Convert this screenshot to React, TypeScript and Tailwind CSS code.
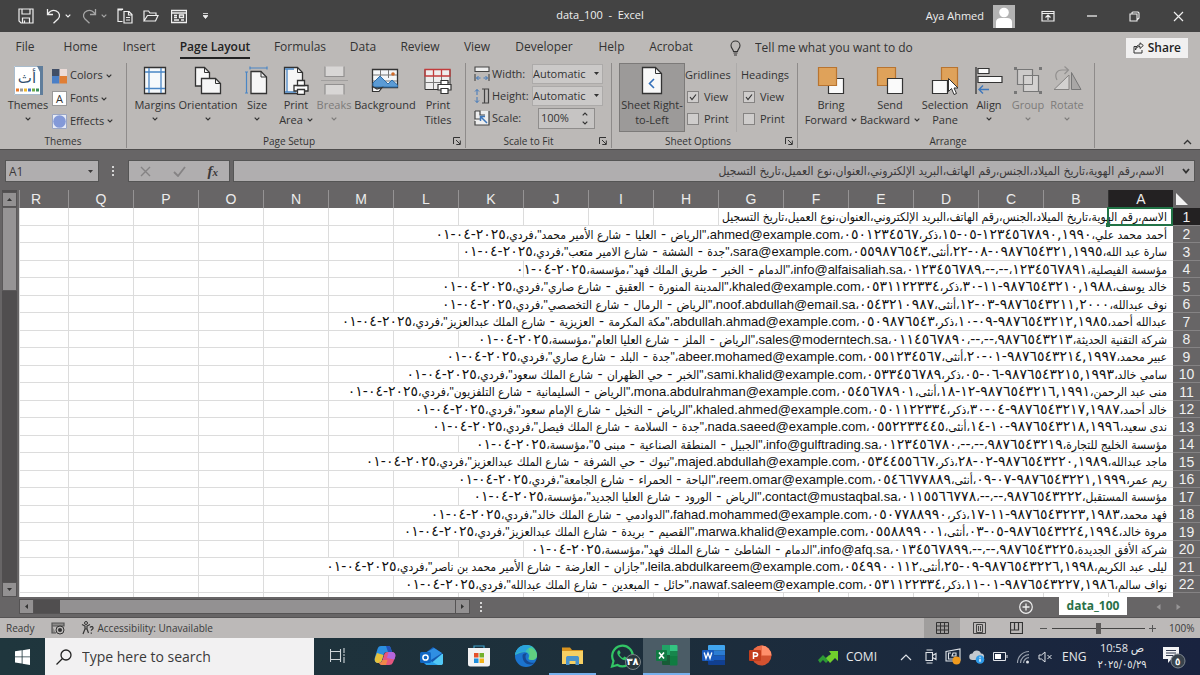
import React from 'react';
import clsx from 'clsx';

interface SheetRow {
  before: string;
  email?: string;
  after?: string;
  span: number; // how many columns the text spills over
}

const HEADER_TEXT = 'الاسم،رقم الهوية،تاريخ الميلاد،الجنس،رقم الهاتف،البريد الإلكتروني،العنوان،نوع العميل،تاريخ التسجيل';

const COLUMNS = ['A', 'B', 'C', 'D', 'E', 'F', 'G', 'H', 'I', 'J', 'K', 'L', 'M', 'N', 'O', 'P', 'Q', 'R'];

const ROWS: SheetRow[] = [
  { before: HEADER_TEXT, span: 7 },
  { before: 'أحمد محمد علي،١٢٣٤٥٦٧٨٩٠,١٩٩٠-٠٥-١٥،ذكر،٠٥٠١٢٣٤٥٦٧،', email: 'ahmed@example.com', after: '،"الرياض - العليا - شارع الأمير محمد"،فردي،٢٠٢٥-٠٤-٠١', span: 12 },
  { before: 'سارة عبد الله،٠٩٨٧٦٥٤٣٢١,١٩٩٥-٠٨-٢٢،أنثى،٠٥٥٩٨٧٦٥٤٣،', email: 'sara@example.com', after: '،"جدة - الششة - شارع الامير متعب"،فردي،٢٠٢٥-٠٤-٠١', span: 11 },
  { before: 'مؤسسة الفيصلية،١٢٣٤٥٦٧٨٩١،--،--،٠١٢٣٤٥٦٧٨٩،', email: 'info@alfaisaliah.sa', after: '،"الدمام - الخبر - طريق الملك فهد"،مؤسسة،٢٠٢٥-٠٤-٠١', span: 10 },
  { before: 'خالد يوسف،٩٨٧٦٥٤٣٢١٠,١٩٨٨-١١-٣٠،ذكر،٠٥٣١١٢٢٣٣٤،', email: 'khaled@example.com', after: '،"المدينة المنورة - العقيق - شارع صاري"،فردي،٢٠٢٥-٠٤-٠١', span: 12 },
  { before: 'نوف عبدالله،٩٨٧٦٥٤٣٢١١,٢٠٠٠-٠٣-١٢،أنثى،٠٥٤٣٢١٠٩٨٧،', email: 'noof.abdullah@email.sa', after: '،"الرياض - الرمال - شارع التخصصي"،فردي،٢٠٢٥-٠٤-٠١', span: 12 },
  { before: 'عبدالله أحمد،٩٨٧٦٥٤٣٢١٢,١٩٨٥-٠٩-١٠،ذكر،٠٥٠٩٨٧٦٥٤٣،', email: 'abdullah.ahmad@example.com', after: '،"مكة المكرمة - العزيزية - شارع الملك عبدالعزيز"،فردي،٢٠٢٥-٠٤-٠١', span: 13 },
  { before: 'شركة التقنية الحديثة،٩٨٧٦٥٤٣٢١٣،--،--،٠١١٤٥٦٧٨٩٠،', email: 'sales@moderntech.sa', after: '،"الرياض - الملز - شارع العليا العام"،مؤسسة،٢٠٢٥-٠٤-٠١', span: 11 },
  { before: 'عبير محمد،٩٨٧٦٥٤٣٢١٤,١٩٩٧-٠١-٢٠،أنثى،٠٥٥١٢٣٤٥٦٧،', email: 'abeer.mohamed@example.com', after: '،"جدة - البلد - شارع صاري"،فردي،٢٠٢٥-٠٤-٠١', span: 12 },
  { before: 'سامي خالد،٩٨٧٦٥٤٣٢١٥,١٩٩٣-٠٦-٠٥،ذكر،٠٥٣٣٤٥٦٧٨٩،', email: 'sami.khalid@example.com', after: '،"الخبر - حي الظهران - شارع الملك سعود"،فردي،٢٠٢٥-٠٤-٠١', span: 12 },
  { before: 'منى عبد الرحمن،٩٨٧٦٥٤٣٢١٦,١٩٩١-١٢-١٨،أنثى،٠٥٤٥٦٧٨٩٠١،', email: 'mona.abdulrahman@example.com', after: '،"الرياض - السليمانية - شارع التلفزيون"،فردي،٢٠٢٥-٠٤-٠١', span: 13 },
  { before: 'خالد أحمد،٩٨٧٦٥٤٣٢١٧,١٩٨٧-٠٤-٣٠،ذكر،٠٥٠١١٢٢٣٣٤،', email: 'khaled.ahmed@example.com', after: '،"الرياض - النخيل - شارع الإمام سعود"،فردي،٢٠٢٥-٠٤-٠١', span: 12 },
  { before: 'ندى سعيد،٩٨٧٦٥٤٣٢١٨,١٩٩٦-١٠-١٤،أنثى،٠٥٥٢٢٣٣٤٤٥،', email: 'nada.saeed@example.com', after: '،"جدة - السلامة - شارع الملك فيصل"،فردي،٢٠٢٥-٠٤-٠١', span: 12 },
  { before: 'مؤسسة الخليج للتجارة،٩٨٧٦٥٤٣٢١٩،--،--،٠١٢٣٤٥٦٧٨٠،', email: 'info@gulftrading.sa', after: '،"الجبيل - المنطقة الصناعية - مبنى ٥"،مؤسسة،٢٠٢٥-٠٤-٠١', span: 11 },
  { before: 'ماجد عبدالله،٩٨٧٦٥٤٣٢٢٠,١٩٨٩-٠٢-٢٨،ذكر،٠٥٣٤٤٥٥٦٦٧،', email: 'majed.abdullah@example.com', after: '،"تبوك - حي الشرفة - شارع الملك عبدالعزيز"،فردي،٢٠٢٥-٠٤-٠١', span: 13 },
  { before: 'ريم عمر،٩٨٧٦٥٤٣٢٢١,١٩٩٩-٠٧-٠٩،أنثى،٠٥٤٦٦٧٧٨٨٩،', email: 'reem.omar@example.com', after: '،"الباحة - الحمراء - شارع الجامعة"،فردي،٢٠٢٥-٠٤-٠١', span: 12 },
  { before: 'مؤسسة المستقبل،٩٨٧٦٥٤٣٢٢٢،--،--،٠١١٥٥٦٦٧٧٨،', email: 'contact@mustaqbal.sa', after: '،"الرياض - الورود - شارع العليا الجديد"،مؤسسة،٢٠٢٥-٠٤-٠١', span: 11 },
  { before: 'فهد محمد،٩٨٧٦٥٤٣٢٢٣,١٩٨٣-١١-١٧،ذكر،٠٥٠٧٧٨٨٩٩٠،', email: 'fahad.mohammed@example.com', after: '،"الدوادمي - شارع الملك خالد"،فردي،٢٠٢٥-٠٤-٠١', span: 12 },
  { before: 'مروة خالد،٩٨٧٦٥٤٣٢٢٤,١٩٩٤-٠٥-٠٣،أنثى،٠٥٥٨٨٩٩٠٠١،', email: 'marwa.khalid@example.com', after: '،"القصيم - بريدة - شارع الملك عبدالعزيز"،فردي،٢٠٢٥-٠٤-٠١', span: 12 },
  { before: 'شركة الأفق الجديدة،٩٨٧٦٥٤٣٢٢٥،--،--،٠١٣٤٥٦٧٨٩٩،', email: 'info@afq.sa', after: '،"الدمام - الشاطئ - شارع الملك فهد"،مؤسسة،٢٠٢٥-٠٤-٠١', span: 10 },
  { before: 'ليلى عبد الكريم،٩٨٧٦٥٤٣٢٢٦,١٩٩٨-٠٩-٢٥،أنثى،٠٥٤٩٩٠٠١١٢،', email: 'leila.abdulkareem@example.com', after: '،"جازان - العارضة - شارع الأمير محمد بن ناصر"،فردي،٢٠٢٥-٠٤-٠١', span: 14 },
  { before: 'نواف سالم،٩٨٧٦٥٤٣٢٢٧,١٩٨٦-٠١-١١،ذكر،٠٥٣١١٢٢٣٣٤،', email: 'nawaf.saleem@example.com', after: '،"حائل - المبعدين - شارع الملك عبدالله"،فردي،٢٠٢٥-٠٤-٠١', span: 12 },
];

const TABS = [
  { label: 'File', width: 'w-[50px]' },
  { label: 'Home', width: 'w-[61px]' },
  { label: 'Insert', width: 'w-[56px]' },
  { label: 'Page Layout', width: 'w-[96px]' },
  { label: 'Formulas', width: 'w-[74px]' },
  { label: 'Data', width: 'w-[52px]' },
  { label: 'Review', width: 'w-[62px]' },
  { label: 'View', width: 'w-[52px]' },
  { label: 'Developer', width: 'w-[82px]' },
  { label: 'Help', width: 'w-[53px]' },
  { label: 'Acrobat', width: 'w-[66px]' },
];

/* ---------- small drawing helpers ---------- */

interface IconProps {
  w: number;
  h?: number;
  className?: string;
  children: React.ReactNode;
}

const Icon: React.FC<IconProps> = ({ w, h = w, className, children }) => (
  <svg width={w} height={h} viewBox={`0 0 ${w} ${h}`} fill="none" className={clsx('shrink-0', className)} aria-hidden="true">
    {children}
  </svg>
);

const Chevron: React.FC<{ className?: string }> = ({ className }) => (
  <Icon w={6} h={4} className={className}>
    <path d="M0.7 0.7 3 3 5.3 0.7" stroke="currentColor" strokeWidth="1.2" />
  </Icon>
);

const Caret: React.FC<{ className?: string }> = ({ className }) => (
  <Icon w={5} h={3} className={className}>
    <path d="M0 0h5L2.5 3z" fill="currentColor" />
  </Icon>
);

const Launcher: React.FC<{ label: string }> = ({ label }) => (
  <button aria-label={label} className="absolute right-1 bottom-[3px]">
    <Icon w={8}>
      <path d="M0.5 7V0.5H7M3 3l4 4M7.3 3.5v4h-4" stroke="#333" />
    </Icon>
  </button>
);

/* ---------- title bar ---------- */

const TitleBar = () => (
  <header className="relative flex h-8 items-center bg-[#434343] text-[#efefef]">
    <div className="flex items-center pl-[18px]">
      <button aria-label="Save" className="w-7">
        <Icon w={16}>
          <path d="M1 1h14v14H3l-2-2zM4 1v5h8V1M4.5 15v-5h7v5M6.5 12.500v2" stroke="currentColor" strokeWidth="1.2" />
        </Icon>
      </button>
      <button aria-label="Undo" className="flex w-9 items-center gap-1">
        <Icon w={15} h={16}>
          <path d="M1.500 1v5.500H7M1.800 6.200C4 3 7 1.800 10 2.800c4 1.500 4.500 5.700 2 8.200l-4.500 4.300" stroke="currentColor" strokeWidth="1.300" />
        </Icon>
        <Chevron />
      </button>
      <button aria-label="Redo" className="flex w-[35px] items-center gap-1 text-[#a5a5a5]">
        <Icon w={15} h={16}>
          <path d="M13.500 1v5.500H8M13.200 6.200C11 3 8 1.800 5 2.800 1 4.300.5 8.500 3 11l4.500 4.300" stroke="currentColor" strokeWidth="1.300" />
        </Icon>
        <Chevron />
      </button>
      <button aria-label="Paste" className="w-[26px]">
        <Icon w={16}>
          <path d="M5.500 13.500H1V2h4M1 2V1h4.500v1M7 3.500h5L15 6.500V15H7zM11.500 3.500V7H15M9 9.500h4M9 12h4" stroke="currentColor" strokeWidth="1.200" />
        </Icon>
      </button>
      <button aria-label="Open" className="w-7">
        <Icon w={16}>
          <path d="M1 13V3h4.500l1.500 2h6v2.500M1 13l3.500-5.500H15L12.500 13z" stroke="currentColor" strokeWidth="1.200" />
        </Icon>
      </button>
      <button aria-label="Form" className="w-8">
        <Icon w={16}>
          <path d="M.5 2.500h15v12H.5zM.5 5h15M3 7.500h3M3 9.500h3M3 12h5M8.500 7h4v2.500h-4zM10 12h3" stroke="currentColor" strokeWidth="1.300" />
        </Icon>
      </button>
      <button aria-label="Customize toolbar">
        <Icon w={5} h={6}>
          <path d="M0 .5h5M0 2.500h5L2.500 5.500z" stroke="currentColor" strokeWidth=".8" fill="currentColor" />
        </Icon>
      </button>
    </div>
    <h1 className="pointer-events-none absolute inset-x-0 top-2 text-center text-[11px] leading-[14px] whitespace-pre">data_100  -  Excel</h1>
    <div className="ml-auto flex items-center">
      <span className="text-[11px]">Aya Ahmed</span>
      <Icon w={22} h={23} className="ml-[9px]">
        <path d="M0 0h22v23H0z" fill="#b3b3b3" />
        <circle cx="11" cy="7.500" r="4.800" fill="#fff" />
        <path d="M3 23v-6c0-2.500 2-4 5-4h6c3 0 5 1.500 5 4v6z" fill="#fff" />
      </Icon>
      <button aria-label="Ribbon display options" className="ml-[26px]">
        <Icon w={14} h={12}>
          <path d="M1 1.500h12v9.500H1zM1 3.500h12M7 10V5M4.500 7.500 7 5l2.500 2.500" stroke="currentColor" strokeWidth="1.200" />
        </Icon>
      </button>
      <button aria-label="Minimize" className="ml-8">
        <Icon w={10} h={12}><path d="M0 6h10" stroke="currentColor" strokeWidth="1.300" /></Icon>
      </button>
      <button aria-label="Restore" className="ml-8">
        <Icon w={11}>
          <path d="M1 3h7v7H1zM3 3V1.500L4 1h5l1 1v5L8.500 8.500" stroke="currentColor" strokeWidth="1.100" />
        </Icon>
      </button>
      <button aria-label="Close" className="mr-4 ml-[33px]">
        <Icon w={11}><path d="m1 1 9 9m0-9-9 9" stroke="currentColor" strokeWidth="1.200" /></Icon>
      </button>
    </div>
  </header>
);

/* ---------- ribbon ---------- */

const TabStrip = () => (
  <nav className="flex h-[31px] items-center text-[12px] text-[#333]">
    {TABS.map(tab => {
      const active = tab.label === 'Page Layout';
      return (
        <button key={tab.label} className={clsx('flex justify-center whitespace-nowrap', tab.width)}>
          <span className={clsx('border-b-2 leading-5', active ? 'border-[#222] font-semibold text-[#222]' : 'border-transparent')}>{tab.label}</span>
        </button>
      );
    })}
    <label className="flex items-center pl-[26px]">
      <Icon w={11} h={16}>
        <path d="M3.500 11.500C3.500 9.500 1 8.500 1 5.500a4.500 4.500 0 0 1 9 0c0 3-2.500 4-2.500 6zM3.500 13h4M4 15h3" stroke="#333" strokeWidth="1.100" />
      </Icon>
      <input placeholder="Tell me what you want to do" className="ml-[14px] w-48 bg-transparent leading-4 outline-none placeholder:text-[#333]" />
    </label>
    <button className="mr-3 ml-auto flex h-5 items-center gap-1 bg-[#f1f0f0] px-[7px] font-semibold text-[#222]">
      <Icon w={11} h={12}>
        <path d="M4 4.500H1V11h8V8M2.500 8C3 5.500 4.500 4.500 7 4.500V6.500L10.300 3.500 7 .8v2C4 3 2.800 5 2.500 8z" stroke="#333" />
      </Icon>
      Share
    </button>
  </nav>
);

interface BigButtonProps {
  icon: React.ReactNode;
  lines: string[];
  width: string;
  arrow?: boolean;
  disabled?: boolean;
}

const BigButton: React.FC<BigButtonProps> = ({ icon, lines, width, arrow, disabled }) => (
  <button disabled={disabled} className={clsx('flex flex-col items-center pt-[3px] whitespace-nowrap', width, disabled ? 'text-[#7d7b7a]' : 'text-[#333]')}>
    {icon}
    <span className="mt-[2px] text-[11px] leading-[15px]">{lines[0]}</span>
    {lines[1] ? (
      <span className="flex items-center gap-1 text-[11px] leading-[15px]">{lines[1]}{arrow && <Chevron />}</span>
    ) : (
      arrow && <Chevron className="mt-[5px]" />
    )}
  </button>
);

const Group: React.FC<{ label: string; width: string; launcher?: boolean; children: React.ReactNode }> = ({ label, width, launcher, children }) => (
  <section aria-label={label} className={clsx('relative flex h-[85px] flex-col justify-between border-r border-[#8e8b8a]', width)}>
    <div className="flex">{children}</div>
    <p className={clsx('text-center text-[10px] leading-[13px] text-[#333]', launcher && 'pr-5')}>{label}</p>
    {launcher && <Launcher label={`${label} options`} />}
  </section>
);

const ThemesGroup = () => (
  <Group label="Themes" width="w-[127px]">
    <BigButton
      width="w-[56px]"
      arrow
      lines={['Themes']}
      icon={
        <svg width="29" height="29" viewBox="0 0 29 29" aria-hidden="true">
          <path d="M0 0h29v29H0z" fill="#fff" />
          <path d="M.5.5h28v28H.5z" fill="none" stroke="#a9bccd" />
          <path d="M23 0h6v29h-3V6z" fill="#5f7d9b" />
          <path d="M2 22.500h3v3H2z" fill="#e8792b" /><path d="M6 22.500h3v3H6z" fill="#9a9a9a" />
          <path d="M10 22.500h3v3h-3z" fill="#eeb92f" /><path d="M14 22.500h3v3h-3z" fill="#4472c4" />
          <path d="M18 22.500h3v3h-3z" fill="#70ad47" /><path d="M22 22.500h3v3h-3z" fill="#3a8f5c" />
          <text x="13" y="17" textAnchor="middle" fontSize="15" fontFamily="DejaVu Sans, sans-serif" fill="#34506d">أث</text>
        </svg>
      }
    />
    <div className="flex flex-col pt-px text-[11px] text-[#333]">
      <button className="-ml-1 flex h-[23px] items-center gap-[3px]">
        <Icon w={15} h={16}>
          <path d="M0 1h8v7H0z" fill="#404e66" /><path d="M7.500 1H15v7H7.500z" fill="#ecdcd8" />
          <path d="M0 8h7.500v7.500H0z" fill="#4a7fc6" /><path d="M7.500 8H15v7.500H7.500z" fill="#e07e35" />
        </Icon>
        Colors <Chevron />
      </button>
      <button className="-ml-1 flex h-[23px] items-center gap-[3px]">
        <span className="flex h-[15px] w-[15px] items-center justify-center border border-[#999] bg-white text-[11px] leading-none">A</span>
        Fonts <Chevron />
      </button>
      <button className="-ml-1 flex h-[22px] items-center gap-[3px]">
        <Icon w={15}>
          <path d="M.5.5h14v14H.5z" fill="#e8ecf6" stroke="#9aa6c4" />
          <circle cx="7.500" cy="7.500" r="6.300" fill="#8399d8" />
        </Icon>
        Effects <Chevron />
      </button>
    </div>
  </Group>
);

const PageSetupGroup = () => (
  <Group label="Page Setup" width="w-[339px] pl-[6px]" launcher>
    <BigButton width="w-[44px]" arrow lines={['Margins']} icon={
      <Icon w={24} h={29}>
        <path d="M1.500 1.500h21v26h-21z" fill="#f6f9fb" stroke="#333" strokeWidth="1.300" />
        <path d="M6 2v25M18 2v25M2 6h20M2 22.500h20" stroke="#4a86c5" strokeWidth="1.300" />
      </Icon>
    } />
    <BigButton width="w-[62px]" arrow lines={['Orientation']} icon={
      <Icon w={28} h={29}>
        <path d="M1.500 1.500h9l5 5V20h-14z" fill="#f6f6f6" stroke="#333" strokeWidth="1.300" />
        <path d="M10.500 1.500v5h5" stroke="#333" />
        <path d="M7.500 12.500h14l5 5v10h-19z" fill="#f6f6f6" stroke="#333" strokeWidth="1.300" />
        <path d="M21.500 12.500v5h5" stroke="#333" />
      </Icon>
    } />
    <BigButton width="w-[36px]" arrow lines={['Size']} icon={
      <Icon w={24} h={29}>
        <path d="M5 2h17M5 .5v3M22 .5v3M1.500 6v21M0 6h3M0 27h3" stroke="#4a86c5" strokeWidth="1.200" />
        <path d="M6 5.500h10l5.500 5.500v16.500H6z" fill="#f6f6f6" stroke="#333" strokeWidth="1.300" />
        <path d="M16 5.500V11h5.500" stroke="#333" />
      </Icon>
    } />
    <BigButton width="w-[42px]" arrow lines={['Print', 'Area']} icon={
      <Icon w={26} h={29}>
        <path d="M1.500 1.500h13l5 5v21h-18z" fill="#f6f6f6" stroke="#333" strokeWidth="1.300" />
        <path d="M14.500 1.500v5h5" stroke="#333" />
        <path d="M4 3v23M2 26h11M2 3h9" stroke="#4a86c5" strokeWidth="1.300" />
        <path d="M11 19.500h14V25H11z" fill="#fff" stroke="#333" strokeWidth="1.300" />
        <path d="M14.500 14.500h7v5h-7zM14.500 23.500h7v5h-7z" fill="#fff" stroke="#333" strokeWidth="1.300" />
      </Icon>
    } />
    <BigButton width="w-[34px]" arrow disabled lines={['Breaks']} icon={
      <Icon w={27} h={29}>
        <path d="M4 .5v10h19V.5M4 28.500v-10h19v10" fill="#d8d6d5" stroke="#929090" strokeWidth="1.200" />
        <path d="M0 14.500h27" stroke="#a19f9e" />
      </Icon>
    } />
    <BigButton width="w-[68px]" lines={['Background']} icon={
      <Icon w={28} h={29}>
        <path d="M1.500 3.500h25v18h-25z" fill="#f4f6f8" stroke="#333" strokeWidth="1.300" />
        <path d="M9.500 4v6M17.500 4v8M2 9h24M2 15h24" stroke="#777" />
        <circle cx="22" cy="8" r="1.800" fill="#d06a28" />
        <path d="M2 21v-4l7-7 8 8 4-4 5.500 5v2z" fill="#5b9bd5" stroke="#2f6ea8" />
        <path d="M1.500 20.500v5H8l3-4-5 1.500z" fill="#f6f6f6" stroke="#333" strokeWidth="1.200" />
      </Icon>
    } />
    <BigButton width="w-[38px]" lines={['Print', 'Titles']} icon={
      <Icon w={28} h={29}>
        <path d="M1 3.500h25v20H1z" fill="#eee" stroke="#333" />
        <path d="M9.500 4v19M17.500 4v19M1 16.500h25" stroke="#777" />
        <path d="M1 3.500h25V10H1zM9.500 4v6M17.500 4v6" stroke="#c23b3b" strokeWidth="1.300" />
        <path d="M14 18.500h13V24H14z" fill="#fff" stroke="#333" strokeWidth="1.200" />
        <path d="M17 14.500h7v4h-7zM17 22.500h7v5h-7z" fill="#fff" stroke="#333" strokeWidth="1.200" />
      </Icon>
    } />
  </Group>
);

const ScaleSelect: React.FC<{ id: string }> = ({ id }) => (
  <div className="relative ml-auto">
    <select id={id} className="h-5 w-[71px] appearance-none border border-[#acaaa9] bg-[#cbc9c8] text-[11px] text-[#333]">
      <option>Automatic</option>
    </select>
    <Caret className="pointer-events-none absolute top-2 right-1" />
  </div>
);

const ScaleGroup = () => (
  <Group label="Scale to Fit" width="w-[146px]" launcher>
    <div className="flex w-full flex-col pr-2 pl-2 text-[11px] text-[#333]">
      <div className="flex h-[22px] items-center">
        <Icon w={16} className="mr-[2px]">
          <path d="M1 1v4.500h14V1zM1 8v7M15 8v7" stroke="#444" fill="#eee" strokeWidth="1.100" />
          <path d="M2.500 12h4M9.500 12h4M4.500 10l-2 2 2 2M11.500 10l2 2-2 2" stroke="#3e77bb" />
        </Icon>
        <label htmlFor="width">Width:</label>
        <ScaleSelect id="width" />
      </div>
      <div className="flex h-[22px] items-center">
        <Icon w={16} className="mr-[2px]">
          <path d="M8 1h6.500v14H8M10.500 1v14" stroke="#444" strokeWidth="1.200" />
          <path d="M3 1.500V7M3 9v5.500M1 3.500l2-2 2 2M1 12.500l2 2 2-2" stroke="#3e77bb" />
        </Icon>
        <label htmlFor="height">Height:</label>
        <ScaleSelect id="height" />
      </div>
      <div className="flex h-[22px] items-center">
        <Icon w={16} className="mr-[2px]">
          <path d="M1 1h14v14H1z" fill="#eee" />
          <path d="M1 1v8h5M1 1h5v4h5M1 11v4h14V1" stroke="#444" strokeWidth="1.200" />
          <path d="m13 13-6-6M6.500 11V6.500H11" stroke="#3e77bb" strokeWidth="1.500" />
        </Icon>
        <label htmlFor="scale">Scale:</label>
        <div className="mr-2 ml-auto flex h-[21px] w-[57px] border border-[#8f8d8c] bg-[#c6c4c3]">
          <input id="scale" defaultValue="100%" className="w-9 bg-transparent pl-[2px] outline-none" />
          <div className="flex flex-1 flex-col items-center justify-between py-[3px]">
            <button aria-label="Increase scale"><Chevron className="rotate-180" /></button>
            <button aria-label="Decrease scale"><Chevron /></button>
          </div>
        </div>
      </div>
    </div>
  </Group>
);

const CheckRow: React.FC<{ id: string; label: string; checked?: boolean }> = ({ id, label, checked }) => (
  <div className="flex h-[22px] items-center gap-[5px] pl-[2px]">
    <span className="relative flex">
      <input id={id} type="checkbox" defaultChecked={checked} className="peer size-3 appearance-none border border-[#858382] bg-[#cfcdcc]" />
      <Icon w={12} className="pointer-events-none absolute inset-0 opacity-0 peer-checked:opacity-100">
        <path d="m3 6 2 2.500L9 3.500" stroke="#333" strokeWidth="1.200" />
      </Icon>
    </span>
    <label htmlFor={id}>{label}</label>
  </div>
);

const SheetOptionsGroup = () => (
  <Group label="Sheet Options" width="w-[186px] pl-[7px]" launcher>
    <button aria-pressed="true" className="flex h-[69px] w-[66px] flex-col items-center border border-[#7c7a79] bg-[#9c9a99] pt-[2px] text-[11px] leading-[15px] whitespace-nowrap text-[#333]">
      <Icon w={22} h={29}>
        <path d="M1.500 1.500h13l6 6v20h-19z" fill="#f8f8f8" stroke="#333" strokeWidth="1.300" />
        <path d="M14.500 1.500v6h6" stroke="#333" />
        <path d="m13 13-4.500 4.500L13 22" stroke="#3470ba" strokeWidth="1.600" />
      </Icon>
      <span className="mt-[2px]">Sheet Right-</span>
      <span>to-Left</span>
    </button>
    <div className="flex flex-col border-r border-[#adabaa] pt-px text-[11px] text-[#333]">
      <div className="w-[51px] leading-[22px]">Gridlines</div>
      <CheckRow id="grid-view" label="View" checked />
      <CheckRow id="grid-print" label="Print" />
    </div>
    <div className="flex flex-col pt-px pl-[4px] text-[11px] text-[#333]">
      <div className="leading-[22px]">Headings</div>
      <CheckRow id="head-view" label="View" checked />
      <CheckRow id="head-print" label="Print" />
    </div>
  </Group>
);

const ArrangeGroup = () => (
  <Group label="Arrange" width="w-[297px] pl-[4px]">
    <BigButton width="w-[58px]" arrow lines={['Bring', 'Forward']} icon={
      <Icon w={28} h={29}>
        <path d="M11.500 12.500h15v15h-15z" fill="#fafafa" stroke="#333" strokeWidth="1.200" />
        <path d="M1.500 1.500h18v18h-18z" fill="#dfa25a" stroke="#b87430" strokeWidth="1.200" />
      </Icon>
    } />
    <BigButton width="w-[60px]" arrow lines={['Send', 'Backward']} icon={
      <Icon w={28} h={29}>
        <path d="M1.500 1.500h18v18h-18z" fill="#dfa25a" stroke="#b87430" strokeWidth="1.200" />
        <path d="M11.500 12.500h15v15h-15z" fill="#fafafa" stroke="#333" strokeWidth="1.200" />
      </Icon>
    } />
    <BigButton width="w-[50px]" lines={['Selection', 'Pane']} icon={
      <Icon w={28} h={29}>
        <path d="M10.500 1.500h16v19h-16z" fill="#dfa25a" stroke="#b87430" strokeWidth="1.200" />
        <path d="M1.500 14.500h15v13h-15z" fill="#fafafa" stroke="#333" strokeWidth="1.200" />
        <path d="M17.500 12.500v13l3-3 2.500 6 2.500-1-2.500-5.500H27z" fill="#fff" stroke="#333" />
      </Icon>
    } />
    <BigButton width="w-[38px]" arrow lines={['Align']} icon={
      <Icon w={28} h={29}>
        <path d="M1 1v27" stroke="#333" strokeWidth="1.300" />
        <path d="M3 2.500h11v5H3zM3 10.500h24v6H3z" fill="#fafafa" stroke="#333" strokeWidth="1.200" />
        <path d="M14 23.500H4M8 19.500l-4 4 4 4" stroke="#3e77bb" strokeWidth="1.400" />
      </Icon>
    } />
    <BigButton width="w-[40px]" arrow disabled lines={['Group']} icon={
      <Icon w={28} h={29}>
        <path d="M3.500 3.500h15v15h-15z" fill="#cccac9" stroke="#777" strokeWidth="1.200" />
        <path d="M9.500 9.500h15v16h-15z" stroke="#777" fill="#d3d1d0" strokeWidth="1.200" />
        <path d="M9.500 18.500h9v-9" stroke="#777" />
        <path d="M0 1h3v3H0zM25 1h3v3h-3zM0 25h3v3H0zM25 25h3v3h-3z" fill="#777" />
      </Icon>
    } />
    <BigButton width="w-[38px]" arrow disabled lines={['Rotate']} icon={
      <Icon w={29} h={29}>
        <path d="M1 23.500h15V9z" fill="#d3d1d0" stroke="#858382" />
        <path d="M18.500 6.500v17H28z" fill="#a9a7a6" stroke="#777" />
        <path d="M4 14C1 8 4 4 9 4h6M11.500.5 15.500 4l-4 4" stroke="#92908f" strokeWidth="1.200" />
      </Icon>
    } />
  </Group>
);

const Ribbon = () => (
  <div className="border-b border-[#4f4d4d] bg-[#bcb9b7]">
    <TabStrip />
    <div className="flex h-[86px]">
      <ThemesGroup />
      <PageSetupGroup />
      <ScaleGroup />
      <SheetOptionsGroup />
      <ArrangeGroup />
      <button aria-label="Collapse the ribbon" className="mt-auto mr-2 mb-1 ml-auto">
        <Icon w={9} h={6}><path d="m1 5 3.500-3.500L8 5" stroke="#333" strokeWidth="1.300" /></Icon>
      </button>
    </div>
  </div>
);

/* ---------- formula bar ---------- */

const FormulaBar = () => (
  <div className="flex items-center px-[5px] pt-[10px] pb-2 text-[#3b393a]">
    <div className="relative flex">
      <input aria-label="Name box" defaultValue="A1" className="h-[22px] w-[94px] border border-[#555] bg-[#b0aeaf] pl-[3px] text-[12px]" />
      <Caret className="absolute top-[10px] right-[6px]" />
    </div>
    <Icon w={3} h={10} className="mx-[13px]">
      <path d="M0 0h2v2H0zM0 4h2v2H0zM0 8h2v2H0z" fill="#d5d5d5" />
    </Icon>
    <div className="flex h-[22px] w-[102px] items-center justify-around border border-[#555] bg-[#b0aeaf]">
      <button aria-label="Cancel"><Icon w={11}><path d="m1 1 9 9m0-9-9 9" stroke="#858384" strokeWidth="1.400" /></Icon></button>
      <button aria-label="Enter"><Icon w={13} h={11}><path d="m1 6 4 4 7-9" stroke="#858384" strokeWidth="1.800" /></Icon></button>
      <button aria-label="Insert function" className="font-['Liberation_Serif',serif] text-[15px] leading-none font-bold italic">f<span className="text-[11px]">x</span></button>
    </div>
    <div className="ml-[3px] flex h-[22px] flex-1 items-center border border-[#555] bg-[#b0aeaf] pr-1">
      <input aria-label="Formula bar" dir="rtl" defaultValue={HEADER_TEXT} className="h-5 min-w-0 flex-1 bg-transparent pr-[18px] font-['DejaVu_Sans_Condensed','DejaVu_Sans',sans-serif] text-[12px] leading-4 outline-none" />
      <button aria-label="Expand formula bar"><Icon w={8} h={6}><path d="m1 1 3 3.500L7 1" stroke="#333" strokeWidth="1.800" /></Icon></button>
    </div>
  </div>
);

/* ---------- grid ---------- */

const ARROW_BOX = 'flex items-center justify-center border border-[#555354] bg-[#939192] text-[#333]';

const VerticalScroll = () => (
  <div className="mr-[2px] ml-[2px] flex w-[15px] flex-col bg-[#504e4f] pt-[2px]">
    <button aria-label="Scroll up" className={clsx('h-[15px]', ARROW_BOX)}><Caret className="rotate-180" /></button>
    <div className="h-[84px] border border-[#5b595a] bg-[#969495]" />
    <button aria-label="Scroll down" className={clsx('mt-auto h-[15px]', ARROW_BOX)}><Caret /></button>
  </div>
);

// Arabic letters are drawn small, the digit runs and dashes a bit wider
const ArabicText: React.FC<{ text: string }> = ({ text }) => (
  <span className="text-[12px]">
    {text.split(/([٠-٩][٠-٩,-]*| - |--)/).map((part, i) =>
      i % 2 ? <span key={i} className="font-['DejaVu_Sans',sans-serif] text-[14px]">{part}</span> : part
    )}
  </span>
);

const Grid = () => (
  <div className="min-w-0 flex-1 overflow-hidden bg-white">
    <table dir="rtl" className="w-full table-fixed border-separate border-spacing-0 font-['Liberation_Sans','DejaVu_Sans_Condensed','DejaVu_Sans',sans-serif] text-[#111]">
      <colgroup>
        <col className="w-[27px]" />
        {COLUMNS.map(c => <col key={c} className={c === 'R' ? undefined : 'w-[65px]'} />)}
      </colgroup>
      <thead>
        <tr className="h-[18px] bg-[#676566] text-[14px] leading-[18px] text-[#ececec]">
          <th aria-label="Select all" className="p-0">
            <Icon w={12} className="mr-[12px] block"><path d="M0 0v12h12z" fill="#f2f2f2" /></Icon>
          </th>
          {COLUMNS.map(c => (
            <th key={c} scope="col" className={clsx('overflow-hidden border-l p-0 font-normal', c === 'A' ? 'border-[#333] bg-[#232122]' : 'border-[#959394]', c === 'R' && 'pr-[16px]')}>{c}</th>
          ))}
        </tr>
      </thead>
      <tbody>
        {ROWS.map((row, i) => (
          <tr key={i} className="h-[17px] odd:h-[18px]">
            <th scope="row" className={clsx('border-b border-[#858384] p-0 text-[14px] leading-4 font-normal text-[#f0f0f0]', i === 0 ? 'bg-[#232122]' : 'bg-[#676566]')}>{i + 1}</th>
            <td colSpan={row.span} className="relative border-b border-l border-[#dcdcdc] p-0 pr-[6px] text-[13px] leading-[14px] whitespace-nowrap">
              <ArabicText text={row.before} />
              {row.email}
              <ArabicText text={row.after ?? ''} />
              {i === 0 && (
                <span className="absolute -top-px right-0 h-[19px] w-[66px] border-2 border-[#217346]">
                  <span className="absolute -bottom-[3px] -left-[3px] size-1 bg-[#217346]" />
                </span>
              )}
            </td>
            {COLUMNS.slice(row.span).map(c => <td key={c} className="border-b border-l border-[#dcdcdc] p-0" />)}
          </tr>
        ))}
        <tr className="h-1">
          <th className="bg-[#676566] p-0" />
          {COLUMNS.map(c => <td key={c} className="border-l border-[#dcdcdc] p-0" />)}
        </tr>
      </tbody>
    </table>
  </div>
);

const SheetNav = () => (
  <div className="flex h-[21px] items-start border-b border-[#555354] pl-[19px]">
    <button aria-label="Scroll left" className={clsx('mt-[2px] h-[15px] w-[15px]', ARROW_BOX)}><Caret className="rotate-90" /></button>
    <div className="mt-[2px] h-[15px] w-[421px] border-y border-[#555354] bg-[#504e4f] pl-[26px]">
      <div className="h-full bg-[#939192]" />
    </div>
    <button aria-label="Scroll right" className={clsx('mt-[2px] h-[15px] w-[15px]', ARROW_BOX)}><Caret className="-rotate-90" /></button>
    <Icon w={2} h={10} className="mt-[5px] ml-[10px]">
      <path d="M0 0h2v2H0zM0 4h2v2H0zM0 8h2v2H0z" fill="#d5d5d5" />
    </Icon>
    <div className="ml-auto flex items-start">
      <button aria-label="New sheet" className="mt-[3px] mr-[26px]">
        <Icon w={14}>
          <circle cx="7" cy="7" r="6.300" stroke="#eee" strokeWidth="1.200" />
          <path d="M7 3.500v7M3.500 7h7" stroke="#eee" strokeWidth="1.300" />
        </Icon>
      </button>
      <button className="h-[18px] w-[68px] bg-white text-center text-[12px] leading-[18px] font-bold text-[#2a7048]">data_100</button>
      <div className="mt-[7px] mr-[19px] ml-[29px] flex gap-[15px] text-[#989697]">
        <Icon w={5} h={6}><path d="M4.500 0v6L.5 3z" fill="currentColor" /></Icon>
        <Icon w={5} h={6}><path d="M.5 0v6l4-3z" fill="currentColor" /></Icon>
      </div>
    </div>
  </div>
);

const StatusBar = () => (
  <footer className="flex h-5 items-center bg-[#bcb9b8] pl-[6px] text-[10px] text-[#3a3a3a]">
    <span>Ready</span>
    <Icon w={14} h={13} className="ml-[17px]">
      <path d="M1 1h12v3H1zM1 4v7h4" stroke="#555" strokeWidth="1.200" fill="#8c8a89" />
      <circle cx="9" cy="8" r="4" fill="#bcb9b8" stroke="#333" /><circle cx="9" cy="8" r="2" fill="#333" />
    </Icon>
    <button className="ml-4 flex items-center gap-[3px]">
      <Icon w={13} h={14}>
        <circle cx="5" cy="2" r="1.500" stroke="#333" />
        <path d="m1 3.500 3 1.500v3l-2 5M9 3.500 6 5v3l1.500 4M4 8h2M9 6.500c1-1.500 3.500-1 3 .8-.3 1-1.700 1-1.700 2.400M10.300 11.500v1.300" stroke="#333" strokeWidth="1.200" />
      </Icon>
      Accessibility: Unavailable
    </button>
    <div className="ml-auto flex h-full items-center">
      <button aria-label="Normal view" className="flex h-full w-9 items-center justify-center bg-[#a09e9d]">
        <Icon w={13} h={12}><path d="M.5.5h12v11H.5zM.5 4h12M.5 8h12M4.500.5v11M8.500.5v11" stroke="#333" /></Icon>
      </button>
      <button aria-label="Page layout view" className="flex w-[38px] justify-center">
        <Icon w={13} h={12}><path d="M.5.5h12v11H.5zM3.500 2.500h6v8h-6zM5.500 4v5M7.500 4v5" stroke="#444" /></Icon>
      </button>
      <button aria-label="Page break preview" className="flex w-[37px] justify-center">
        <Icon w={13} h={12}><path d="M.5.5h12v11H.5zM4.500.5V8h4V.5M.5 8h4" stroke="#333" strokeWidth="1.200" /></Icon>
      </button>
      <button aria-label="Zoom out" className="ml-[5px] w-3"><Icon w={7}><path d="M0 3.500h7" stroke="#555" /></Icon></button>
      <input aria-label="Zoom" type="range" defaultValue={50} className="h-3 w-[93px] appearance-none bg-transparent [&::-webkit-slider-runnable-track]:h-px [&::-webkit-slider-runnable-track]:bg-[#444] [&::-webkit-slider-thumb]:-mt-[5px] [&::-webkit-slider-thumb]:h-[11px] [&::-webkit-slider-thumb]:w-[5px] [&::-webkit-slider-thumb]:appearance-none [&::-webkit-slider-thumb]:bg-[#5d5b5a]" />
      <button aria-label="Zoom in" className="ml-1 w-[20px]"><Icon w={7}><path d="M0 3.500h7M3.500 0v7" stroke="#555" /></Icon></button>
      <span className="w-[31px]">100%</span>
    </div>
  </footer>
);

/* ---------- windows taskbar ---------- */

const TASK_ICONS: { name: string; state?: 'open' | 'active'; art: React.ReactNode }[] = [
  {
    name: 'Task view',
    art: <Icon w={16} h={15}><path d="M.5 1v2.500h10V1M.5 14v-2.500h10V14M.5 3.500h10v8H.5zM14 0v5M14 9v6M13 7h2" stroke="#cfd6d9" strokeWidth="1.100" /></Icon>,
  },
  {
    name: 'Copilot',
    art: (
      <Icon w={22} h={21}>
        <path d="M7 1h7c2 0 2.500 1 3 3l1 3h-5c-2 0-3 1-3.500 3L8 15c-.5 2-1.500 3-3.500 3C1 18 0 15.500 1 12L3.500 4C4.200 2 5 1 7 1z" fill="#2b8fe0" />
        <path d="M3 8 1 13c-.8 3 .5 5 3.500 5 2 0 3-1 3.500-3l1.500-5z" fill="#e6c13c" />
        <path d="M14 1c2 0 2.500 1 3 3l1 3h-4l-2-6z" fill="#2452b8" />
        <path d="M15 20H8c-1.500 0-2.500-1-3-2.500C7 18 8 17 8.500 15L10 10c.5-2 1.500-3 3.500-3h4c3.500 0 4.500 2.500 3.500 5.500l-2 5c-.7 1.700-2 2.500-4 2.500z" fill="#e4567f" />
        <path d="M17.500 7c3.500 0 4.500 2.500 3.500 5.500l-.7 2L13 13l1.500-6z" fill="#b366dd" />
        <path d="M8 20c-1.500 0-2.500-1-3-2.500C7 18 8 17 8.500 15h5L12 20z" fill="#f0874a" />
      </Icon>
    ),
  },
  {
    name: 'Outlook',
    art: (
      <Icon w={24} h={20}>
        <path d="m4 8 9-7 10 7v10H4z" fill="#1559b0" />
        <path d="m7 6 7-4 8 5-11 7z" fill="#2f8fe3" />
        <path d="M23 8v9c0 1.500-1 2-2 2H9L22 8z" fill="#52c8f5" />
        <path d="m5 12 13 7H7c-1 0-2-.5-2-2z" fill="#2aa0ea" />
        <rect x="0" y="6" width="11" height="11" rx="1.500" fill="#1268c4" />
        <circle cx="5.500" cy="11.500" r="2.600" stroke="#fff" strokeWidth="1.500" />
      </Icon>
    ),
  },
  {
    name: 'Microsoft Store',
    art: (
      <Icon w={22} h={22}>
        <path d="M6 5V1h10v4" stroke="#3ea0c9" strokeWidth="1.200" />
        <path d="M0 3h22v16a2.500 2.500 0 0 1-2.500 2.500h-17A2.500 2.500 0 0 1 0 19z" fill="#f2f2f3" />
        <path d="M6 8h4.500v4.500H6z" fill="#e5512b" /><path d="M11.500 8H16v4.500h-4.500z" fill="#72b02c" />
        <path d="M6 13.500h4.500V18H6z" fill="#1f8fdd" /><path d="M11.500 13.500H16V18h-4.500z" fill="#f2b319" />
      </Icon>
    ),
  },
  {
    name: 'Edge',
    art: (
      <Icon w={24}>
        <circle cx="12" cy="12" r="11" fill="#1b74cf" />
        <path d="M1 11C2 4.500 7 1 12.500 1 19 1 23 6 23 11c0 3-2.500 5-5.500 5-2.500 0-3.500-1-3-2 1.500-3-.5-6-4-6-5 0-8 3-9.500 3z" fill="#3fc4ae" />
        <path d="M1 11C2 4.500 7 1 12 1c3 0 5 1 6 2-2 0-5 1-6.500 5-5-1-8.500 1-10.500 3z" fill="#2ba3dd" />
        <path d="M15 4c5 0 8 4 8 7.500 0 2.500-2 4.500-5 4.500-2 0-3.500-.8-3-2 2-4 0-7 0-10z" fill="#61d080" />
        <path d="M8.500 12c0 5 3.500 8.500 7.500 8.500 2 0 4-.8 5-2-3.500.8-9.500-.5-9.500-6 0-1.500.8-2.500 1.500-3-2.500-.5-4.500.5-4.500 2.500z" fill="#164a94" />
      </Icon>
    ),
  },
  {
    name: 'File Explorer',
    state: 'open',
    art: (
      <Icon w={21} h={19}>
        <path d="M0 1.500h8L10 4h11v3H0z" fill="#d9941f" />
        <path d="M0 5h21v13H0z" fill="#f7d064" />
        <path d="M4 19v-7c0-1.500 1-2 2-2h9c1 0 2 .5 2 2v7h-3.500v-4h-6v4z" fill="#4a93cc" />
      </Icon>
    ),
  },
  {
    name: 'WhatsApp',
    art: (
      <span className="relative ml-1 flex">
        <Icon w={24}>
          <path d="M2 22.500 3.500 17a10.300 10.300 0 1 1 4 4z" stroke="#32c565" strokeWidth="2.200" />
          <path d="M8.500 6.500c-2 1.200-1.500 4 1.200 6.800s5.800 4 7.200 1.700c.4-.8 0-1.500-2.500-2.500l-1.500 1.500c-1.500-.6-3-2-3.500-3.500l1.200-1.500c-.7-2.400-1.300-3-2.100-2.500z" fill="#32c565" />
        </Icon>
        <span className="absolute top-[10px] left-[15px] flex size-4 items-center justify-center rounded-full border border-[#7b8387] bg-[#29363c] font-['DejaVu_Sans',sans-serif] text-[10px] leading-none font-bold text-white">٣٨</span>
      </span>
    ),
  },
  {
    name: 'Excel',
    state: 'active',
    art: (
      <Icon w={22} h={21}>
        <path d="M6 0h8v10H6z" fill="#21a366" /><path d="M14 0h6.500a1 1 0 0 1 1 1v5H14z" fill="#33c481" />
        <path d="M14 6h7.500v5H14z" fill="#17864c" /><path d="M6 10h8v10H7a1 1 0 0 1-1-1z" fill="#185c37" />
        <path d="M14 11h7.500v8.500a1 1 0 0 1-1 1H14z" fill="#107c41" />
        <rect y="5" width="11" height="11" rx="1" fill="#117a43" />
        <path d="m3 7.500 5 6m0-6-5 6" stroke="#fff" strokeWidth="1.600" />
      </Icon>
    ),
  },
  {
    name: 'Word',
    art: (
      <Icon w={23} h={21}>
        <path d="M6 1a1 1 0 0 1 1-1h15a1 1 0 0 1 1 1v4.500H6z" fill="#41a5ee" /><path d="M6 5.500h17v5H6z" fill="#2b7cd3" />
        <path d="M6 10.500h17v5H6z" fill="#185abd" /><path d="M6 15.500h17V20H7a1 1 0 0 1-1-1z" fill="#103f91" />
        <rect y="5" width="12" height="11" rx="1" fill="#185abd" />
        <path d="M2.200 7.500 4 13.500l2-5.500 2 5.500 1.800-6" stroke="#fff" strokeWidth="1.300" />
      </Icon>
    ),
  },
  {
    name: 'PowerPoint',
    art: (
      <Icon w={23} h={21}>
        <circle cx="12.500" cy="10.500" r="10" fill="#d35230" />
        <path d="M12.500.5a10 10 0 0 1 10 10h-10z" fill="#ff8f6b" /><path d="M2.500 10.500A10 10 0 0 1 12.500.5v10z" fill="#ed6c47" />
        <rect y="5" width="12" height="11" rx="1" fill="#c43e1c" />
        <path d="M4.500 14V7.700H6c3.500 0 3.500 3.600 0 3.600H4.500" stroke="#fff" strokeWidth="1.500" />
      </Icon>
    ),
  },
];

const Taskbar = () => (
  <div className="flex h-[37px] items-center bg-linear-to-r from-[#1f363d] via-[#1d2f3b] to-[#19233f] text-[#e6e9ec]">
    <button aria-label="Start" className="flex w-[45px] justify-center">
      <Icon w={15} h={16}><path d="M0 2.300 6.700 1.300v6.200H0zM7.500 1.200 15 0v7.500H7.500zM0 8.300h6.700v6.300L0 13.600zM7.500 8.300H15V16l-7.500-1.200z" fill="#fff" /></Icon>
    </button>
    <label className="flex h-full w-[269px] items-center bg-[#f2f1f2] pl-[11px]">
      <Icon w={16}>
        <circle cx="10" cy="6" r="5" stroke="#222" strokeWidth="1.300" /><path d="m6.500 9.500-6 6" stroke="#222" strokeWidth="1.300" />
      </Icon>
      <input placeholder="Type here to search" className="ml-[10px] w-40 bg-transparent text-[14px] outline-none placeholder:text-[#3a3a3a]" />
    </label>
    {TASK_ICONS.map(t => (
      <button
        key={t.name}
        aria-label={t.name}
        className={clsx(
          'flex h-full w-[47px] items-center justify-center border-b-2',
          t.state === 'active' && 'border-[#76b0ec] bg-[#4b5c66]',
          t.state === 'open' && 'border-[#76b0ec]',
          !t.state && 'border-transparent'
        )}
      >
        {t.art}
      </button>
    ))}
    <div className="ml-auto flex h-full items-center text-[12px]">
      <button className="flex items-center gap-2">
        <Icon w={20} h={14}>
          <path d="M0 10 5 5l3 3 3-3 2 3-5 5-3-3-3 3z" fill="#2d9a35" />
          <path d="M8 8l5-4-2-3h9v10l-3-3-5 5z" fill="#71d02c" />
        </Icon>
        COMI
      </button>
      <div className="ml-[23px] flex items-center gap-2">
        <Icon w={12} h={8}><path d="m1 7 5-5 5 5" stroke="#dfe3e8" strokeWidth="1.200" /></Icon>
        <Icon w={13} h={15} className="ml-1">
          <path d="M2 3.500h6.500v8H2zM8.500 6.500l3.500-2v6l-3.500-2M2.500 1h6M2.500 14h6" stroke="#dfe3e8" strokeWidth="1.100" />
        </Icon>
        <Icon w={16} h={17}>
          <path d="M1 3.500 15 1v11l-3 1H1zM6 5H3.500v6H9M8 5h3v3H7z" stroke="#dfe3e8" strokeWidth="1.100" />
          <circle cx="11.500" cy="12.500" r="4" fill="#f09a1e" />
        </Icon>
        <Icon w={16} h={15}>
          <path d="M3.500 11a3.200 3.200 0 0 1 0-6.500 4.500 4.500 0 0 1 8.500 0c2.500 0 3.500 2 3 4V11z" fill="#c4c9cf" />
          <circle cx="11" cy="10.500" r="4.300" fill="#2f9be8" /><path d="M11 9.800v3M11 7.800v1" stroke="#fff" strokeWidth="1.300" />
        </Icon>
        <Icon w={15} h={9}><path d="M.5.5h12v8H.5zM14 3v3" stroke="#dfe3e8" /><path d="M2 2h6v5H2z" fill="#fff" /></Icon>
        <Icon w={14}>
          <path d="M1.500 13A11.500 11.500 0 0 1 13 1.500M4.500 13A8.500 8.500 0 0 1 13 4.700M7.500 13A5.500 5.500 0 0 1 13 7.700" stroke="#9aa2ae" strokeWidth="1.200" />
          <circle cx="11.500" cy="12" r="1.500" fill="#dfe3e8" />
        </Icon>
        <Icon w={14} h={12}><path d="M1 4h2.500L7 1v10L3.500 8H1zM9.500 4l4 4m0-4-4 4" stroke="#dfe3e8" /></Icon>
      </div>
      <span className="ml-[10px] w-[25px]">ENG</span>
      <div className="ml-2 w-[54px] text-center text-[11px] leading-4">
        <p>10:58 <span className="font-['DejaVu_Sans',sans-serif]">ص</span></p>
        <p className="font-['DejaVu_Sans_Condensed','DejaVu_Sans',sans-serif] text-[11px]">٢٠٢٥/٠٥/٢٩</p>
      </div>
      <button aria-label="Notifications" className="relative mr-[14px] ml-[14px] flex">
        <Icon w={23} h={24}>
          <path d="M0 2h16v12H8.500L5 18v-4H0z" fill="#f2f3f5" />
          <path d="M3 5.500h10M3 8h10M3 10.500h7" stroke="#333c50" />
          <circle cx="15" cy="16" r="7" fill="#39434c" stroke="#7e868f" />
        </Icon>
        <span className="absolute top-[10px] left-3 text-[10px] leading-3 font-bold text-white">٥</span>
      </button>
    </div>
  </div>
);

const App = () => (
  <div className="flex min-h-screen flex-col bg-[#676566] font-['Open_Sans','Noto_Sans',sans-serif]">
    <TitleBar />
    <Ribbon />
    <FormulaBar />
    <main className="flex flex-1">
      <VerticalScroll />
      <Grid />
    </main>
    <SheetNav />
    <StatusBar />
    <Taskbar />
  </div>
);

export default App;
